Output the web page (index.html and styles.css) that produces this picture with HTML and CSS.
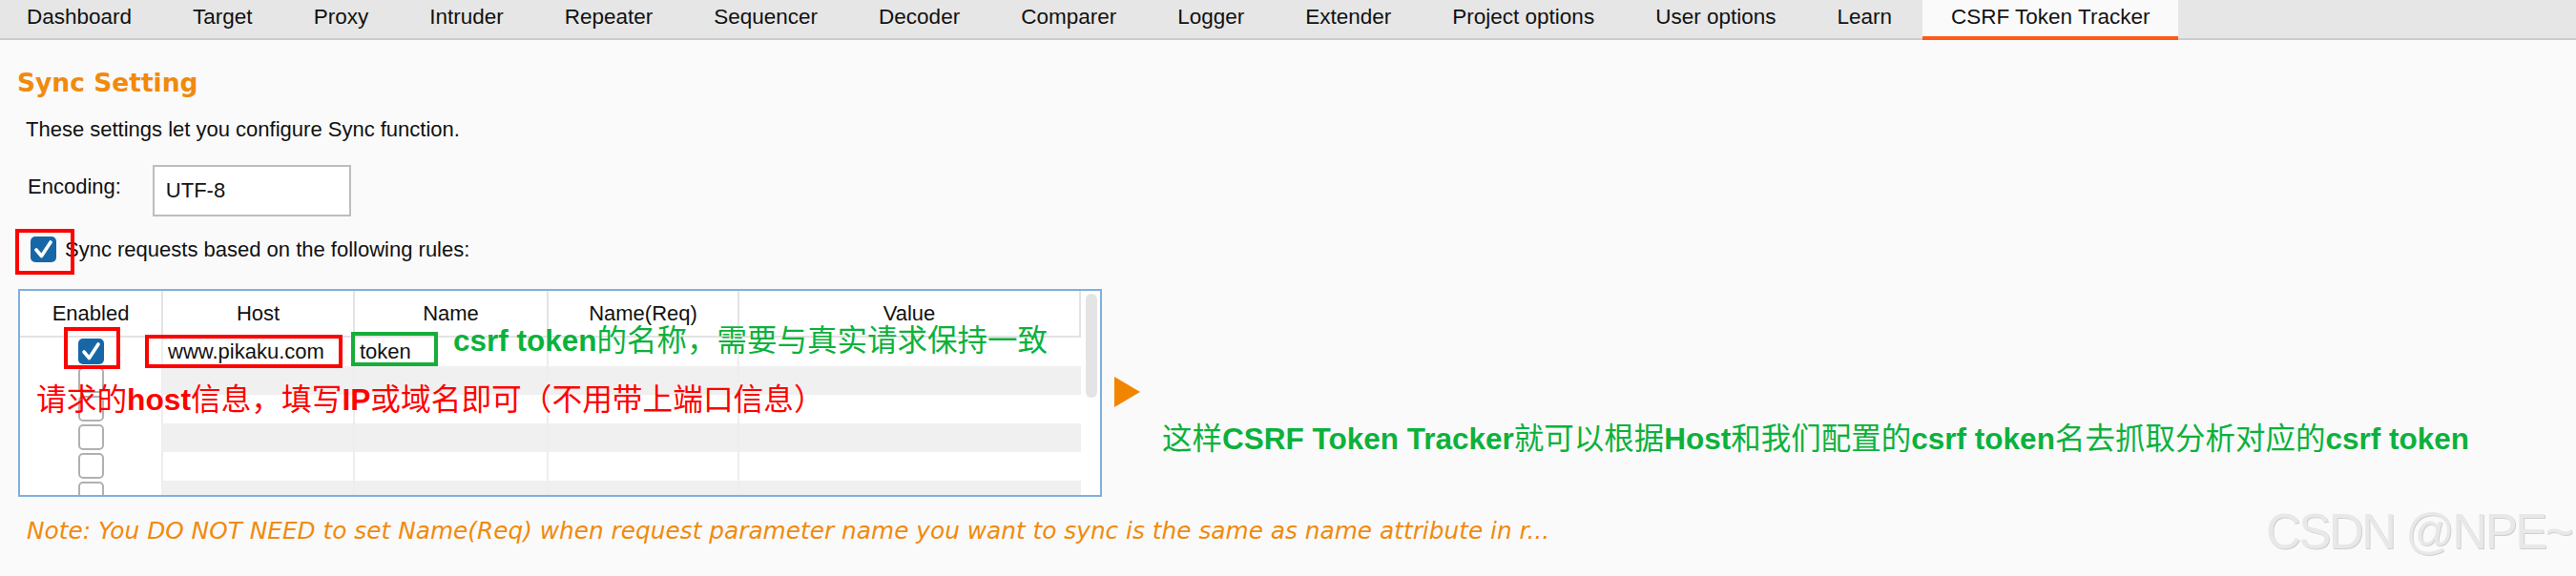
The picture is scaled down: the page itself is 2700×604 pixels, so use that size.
FILE: index.html
```html
<!DOCTYPE html>
<html lang="zh-CN">
<head>
    <meta charset="UTF-8">
    <title>CSRF Token Tracker</title>
    <link rel="stylesheet" href="styles.css">
</head>
<body>
    <div class="app">
        <ul class="tabs">
            <li>Dashboard</li>
            <li>Target</li>
            <li>Proxy</li>
            <li>Intruder</li>
            <li>Repeater</li>
            <li>Sequencer</li>
            <li>Decoder</li>
            <li>Comparer</li>
            <li>Logger</li>
            <li>Extender</li>
            <li>Project options</li>
            <li>User options</li>
            <li>Learn</li>
            <li class="active">CSRF Token Tracker</li>
        </ul>

        <div class="panel">
            <h1 class="title">Sync Setting</h1>
            <p class="desc">These settings let you configure Sync function.</p>

            <div class="field">
                <label class="field-label">Encoding:</label>
                <div class="input">UTF-8</div>
            </div>

            <div class="check-row">
                <span class="box on">
                    <svg viewBox="0 0 27 27"><path d="M6 14 L11.5 20.5 L21 6"/></svg>
                </span>
                <span>Sync requests based on the following rules:</span>
            </div>

            <!-- 规则表格 -->
            <div class="rules">
                <div class="grid">
                    <div class="row head">
                        <div class="cell c-en">Enabled</div>
                        <div class="cell c-host">Host</div>
                        <div class="cell c-name">Name</div>
                        <div class="cell c-req">Name(Req)</div>
                        <div class="cell c-val">Value</div>
                    </div>
                    <div class="row">
                        <div class="cell c-en"><span class="box on"><svg viewBox="0 0 27 27"><path d="M6 14 L11.5 20.5 L21 6"/></svg></span></div>
                        <div class="cell c-host">www.pikaku.com</div>
                        <div class="cell c-name">token</div>
                        <div class="cell c-req"></div>
                        <div class="cell c-val"></div>
                    </div>
                    <div class="row">
                        <div class="cell c-en"><span class="box"></span></div>
                        <div class="cell c-host"></div>
                        <div class="cell c-name"></div>
                        <div class="cell c-req"></div>
                        <div class="cell c-val"></div>
                    </div>
                    <div class="row">
                        <div class="cell c-en"><span class="box"></span></div>
                        <div class="cell c-host"></div>
                        <div class="cell c-name"></div>
                        <div class="cell c-req"></div>
                        <div class="cell c-val"></div>
                    </div>
                    <div class="row">
                        <div class="cell c-en"><span class="box"></span></div>
                        <div class="cell c-host"></div>
                        <div class="cell c-name"></div>
                        <div class="cell c-req"></div>
                        <div class="cell c-val"></div>
                    </div>
                    <div class="row">
                        <div class="cell c-en"><span class="box"></span></div>
                        <div class="cell c-host"></div>
                        <div class="cell c-name"></div>
                        <div class="cell c-req"></div>
                        <div class="cell c-val"></div>
                    </div>
                    <div class="row">
                        <div class="cell c-en"><span class="box"></span></div>
                        <div class="cell c-host"></div>
                        <div class="cell c-name"></div>
                        <div class="cell c-req"></div>
                        <div class="cell c-val"></div>
                    </div>
                </div>
                <div class="gutter"><div class="thumb"></div></div>
            </div>

            <p class="tip">Note: You DO NOT NEED to set Name(Req) when request parameter name you want to sync is the same as name attribute in r...</p>
        </div>

        <!-- 标注 -->
        <div class="mark red m-sync"></div>
        <div class="mark red m-enabled"></div>
        <div class="mark red m-host"></div>
        <div class="mark green m-token"></div>

        <div class="say say-red">请求的<b>host</b>信息，填写<b>IP</b>或域名即可（不用带上端口信息）</div>
        <div class="say say-green s-name"><b>csrf token</b>的名称，需要与真实请求保持一致</div>
        <div class="arrow"></div>
        <div class="say say-green s-result">这样<b>CSRF Token Tracker</b>就可以根据<b>Host</b>和我们配置的<b>csrf token</b>名去抓取分析对应的<b>csrf token</b></div>

        <div class="watermark">CSDN @NPE~</div>
    </div>
</body>
</html>
```

FILE: styles.css
```css
body {
    margin: 0;
    background: #fafafa;
    font-family: "Liberation Sans", Arial, sans-serif;
    font-size: 22px;
    color: #111;
}
.app {
    position: relative;
    width: 2700px;
    height: 604px;
    overflow: hidden;
}

/* tabs */
.tabs {
    display: flex;
    margin: 0;
    padding: 0;
    list-style: none;
    height: 40px;
    background: #e6e6e6;
    border-bottom: 2px solid #c9cdd1;
}
.tabs li {
    padding: 0 32px;
    height: 40px;
    line-height: 36px;
    font-size: 22.5px;
    white-space: nowrap;
}
.tabs li:first-child {
    padding-left: 28px;
}
.tabs li.active {
    box-sizing: border-box;
    height: 42px;
    padding: 0 30px;
    background: #fafafa;
    border-bottom: 4px solid #ff5a17;
}

/* panel */
.title {
    margin: 25px 0 0 18px;
    font-family: "DejaVu Sans", sans-serif;
    font-weight: 700;
    font-size: 26.5px;
    line-height: 40px;
    color: #f18a0c;
}
.desc {
    margin: 14px 0 0 27px;
    line-height: 30px;
}
.field {
    display: flex;
    align-items: flex-start;
    gap: 33px;
    margin: 22px 0 0 29px;
    height: 54px;
}
.field-label {
    line-height: 45px;
}
.input {
    box-sizing: border-box;
    width: 208px;
    height: 54px;
    padding-left: 12px;
    line-height: 50px;
    background: #fff;
    border: 2px solid #bdbdbd;
}
.check-row {
    display: flex;
    align-items: center;
    gap: 9px;
    margin: 21px 0 0 32px;
    height: 27px;
    line-height: 27px;
}

/* checkbox */
.box {
    box-sizing: border-box;
    display: inline-block;
    width: 27px;
    height: 27px;
    border: 2px solid #b1b1b1;
    border-radius: 5px;
    background: #fff;
    vertical-align: middle;
}
.box.on {
    border: none;
    background: #1767a7;
}
.box svg {
    display: block;
    width: 27px;
    height: 27px;
    fill: none;
    stroke: #fff;
    stroke-width: 3.6;
    stroke-linecap: round;
    stroke-linejoin: round;
}

/* rules table */
.rules {
    box-sizing: border-box;
    display: flex;
    width: 1136px;
    height: 218px;
    margin: 28px 0 0 19px;
    border: 2px solid #7fb0de;
    background: #fff;
    overflow: hidden;
}
.grid {
    width: 1112px;
}
.row {
    display: flex;
    height: 30px;
}
.cell {
    box-sizing: border-box;
    height: 30px;
    line-height: 30px;
    padding-left: 5px;
    border-left: 2px solid #eeeeee;
    white-space: nowrap;
}
.c-en {
    width: 148px;
    padding: 0;
    border-left: none;
    text-align: center;
}
.c-host { width: 201px; }
.c-name { width: 203px; }
.c-req { width: 200px; }
.c-val { width: 360px; }
.row:nth-child(odd) .cell {
    background: #f0f0f0;
}
.row:nth-child(odd) .c-en {
    background: #fff;
}
.row.head {
    height: 49px;
}
.row.head .cell {
    height: 49px;
    line-height: 47px;
    padding: 0;
    text-align: center;
    background: #fff;
    border-bottom: 2px solid #e3e3e3;
    border-left-color: #e3e3e3;
}
.row.head .c-en {
    border-left: none;
}
.row.head .c-val {
    border-right: 2px solid #e3e3e3;
}
.c-en .box {
    margin-top: 1px;
    vertical-align: top;
}
.gutter {
    width: 20px;
    background: #fff;
}
.thumb {
    width: 12px;
    height: 109px;
    margin: 3px 0 0 5px;
    border-radius: 6px;
    background: #e4e4e4;
}

.tip {
    margin: 19px 0 0 28px;
    font-family: "DejaVu Sans", sans-serif;
    font-style: italic;
    font-size: 24.8px;
    line-height: 34px;
    color: #f18a0c;
    white-space: nowrap;
}

/* 标注 */
.mark {
    position: absolute;
    box-sizing: border-box;
    border: 4px solid #ff0000;
}
.mark.green {
    border-color: #17ad3a;
}
.m-sync { left: 16px; top: 240px; width: 62px; height: 48px; }
.m-enabled { left: 67px; top: 343px; width: 59px; height: 44px; }
.m-host { left: 152px; top: 351px; width: 207px; height: 35px; }
.m-token { left: 368px; top: 348px; width: 91px; height: 36px; }

.say {
    position: absolute;
    font-family: "Liberation Sans", "Noto Sans CJK SC", sans-serif;
    line-height: 32px;
    white-space: nowrap;
}
.say b {
    font-weight: 700;
}
.say-red {
    left: 38px;
    top: 403px;
    font-size: 31.7px;
    color: #ff0000;
}
.say-green {
    font-size: 31.5px;
    color: #0cb13c;
}
.s-name { left: 475px; top: 341px; }
.s-result { left: 1218px; top: 444px; }
.arrow {
    position: absolute;
    left: 1168px;
    top: 395px;
    width: 0;
    height: 0;
    border-top: 16px solid transparent;
    border-bottom: 16px solid transparent;
    border-left: 27px solid #f28500;
}

.watermark {
    position: absolute;
    right: 5px;
    top: 532px;
    font-size: 51px;
    line-height: 51px;
    letter-spacing: -2.5px;
    color: #e8e8e8;
    text-shadow: 1px 1px 0 #d0d0d0;
    white-space: nowrap;
}
```
